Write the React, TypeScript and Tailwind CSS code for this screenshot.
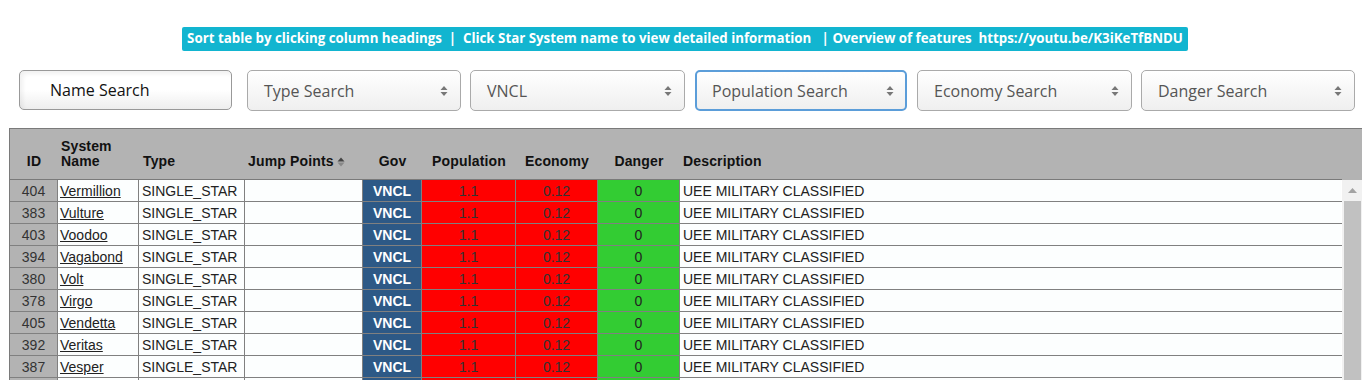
import React from "react";

const rows = [
  ["404", "Vermillion"],
  ["383", "Vulture"],
  ["403", "Voodoo"],
  ["394", "Vagabond"],
  ["380", "Volt"],
  ["378", "Virgo"],
  ["405", "Vendetta"],
  ["392", "Veritas"],
  ["387", "Vesper"],
  ["386", "Vector"],
];

const cols = "grid grid-cols-[48px_81px_106px_118px_59px_94px_82px_82px_661px]";

function Arrows() {
  return (
    <svg width="8" height="12" viewBox="0 0 8 12" className="shrink-0">
      <path d="M4 1 L7.5 5 L0.5 5 Z" fill="#777" />
      <path d="M4 11 L7.5 7 L0.5 7 Z" fill="#777" />
    </svg>
  );
}

function SelectBox({ label, w, focus }: { label: string; w: string; focus?: boolean }) {
  return (
    <div
      className={`${w} h-[41px] shrink-0 flex items-center justify-between rounded-[5px] bg-gradient-to-b from-white to-[#efefef] ${
        focus ? "border-2 border-[#5b9dd9] pl-[15px] pr-[11px]" : "border border-[#aaaaaa] pl-4 pr-[12px]"
      }`}
    >
      <span className="text-[16px] text-[#555]" style={{ fontFamily: '"Open Sans", sans-serif' }}>
        {label}
      </span>
      <Arrows />
    </div>
  );
}

export default function App() {
  return (
    <div className="w-[1370px] h-[380px] overflow-hidden bg-white">
      <div className="pt-[27px] flex justify-center">
        <div
          className="h-[24px] px-[5px] flex items-center bg-[#12b5d0] rounded-[2px] text-white font-bold text-[13.3px] whitespace-pre"
          style={{ fontFamily: '"Open Sans", sans-serif' }}
        >
          {"Sort table by clicking column headings  |  Click Star System name to view detailed information   | Overview of features  https://youtu.be/K3iKeTfBNDU"}
        </div>
      </div>

      <div className="mt-[19px] flex pl-[19px]">
        <div className="w-[213px] h-[40px] shrink-0 flex items-center pl-[30px] rounded-[5px] border border-[#999] bg-gradient-to-b from-white via-white to-[#eeeeee] shadow-[inset_3px_3px_4px_rgba(0,0,0,0.06)]">
          <span className="text-[16px] text-[#111]" style={{ fontFamily: '"Open Sans", sans-serif' }}>
            Name Search
          </span>
        </div>
        <div className="ml-[15px] flex">
          <SelectBox label="Type Search" w="w-[214px]" />
          <div className="w-[9px] shrink-0" />
          <SelectBox label="VNCL" w="w-[215px]" />
          <div className="w-[10px] shrink-0" />
          <SelectBox label="Population Search" w="w-[212px]" focus />
          <div className="w-[10px] shrink-0" />
          <SelectBox label="Economy Search" w="w-[215px]" />
          <div className="w-[9px] shrink-0" />
          <SelectBox label="Danger Search" w="w-[214px]" />
        </div>
      </div>

      <div
        className="mt-[17px] ml-[9px] w-[1353px] border-t border-l border-[#7a7a7a]"
        style={{ fontFamily: '"Liberation Sans", Arial, sans-serif' }}
      >
        <div className="h-[51px] bg-[#b3b3b3] border-b border-[#7a7a7a] w-[1332px] relative">
          <div className={`${cols} h-full items-end pb-[10px] text-[14px] font-bold text-[#111] leading-[15px] tracking-[0.15px]`}>
            <div className="text-center">ID</div>
            <div className="pl-[3px]">
              System
              <br />
              Name
            </div>
            <div className="pl-[4px]">Type</div>
            <div className="pl-[3px] flex items-center gap-[3px]">
              Jump Points
              <svg width="8" height="10" viewBox="0 0 8 10">
                <path d="M4 0.5 L7.5 4.5 L0.5 4.5 Z" fill="#444" />
                <path d="M4 9.5 L7.5 5.5 L0.5 5.5 Z" fill="#888" />
              </svg>
            </div>
            <div className="text-center">Gov</div>
            <div className="text-center">Population</div>
            <div className="text-center">Economy</div>
            <div className="text-center">Danger</div>
            <div className="pl-[3px]">Description</div>
          </div>
          <div className="absolute top-0 left-[1332px] w-[20px] h-[51px] bg-[#b3b3b3]" />
        </div>
        <div className="flex">
          <div className="w-[1332px]">
            {rows.map(([id, name]) => (
              <div key={id} className={`${cols} h-[22px] border-b border-[#808080] text-[14px] leading-[20px]`}>
                <div className="pt-px bg-[#b3b3b3] text-center text-[#333] border-r border-[#808080]">{id}</div>
                <div className="pt-px bg-[#fcfefe] pl-[2px] border-r border-[#808080]">
                  <span className="underline text-[#222]">{name}</span>
                </div>
                <div className="pt-px bg-[#fcfefe] pl-[3px] text-[#222] border-r border-[#808080]">SINGLE_STAR</div>
                <div className="pt-px bg-[#fcfefe] border-r border-[#808080]" />
                <div className="pt-px bg-[#2d5986] text-white font-bold text-center border-r border-[#808080]">VNCL</div>
                <div className="pt-px bg-[#ff0000] text-[#333] text-center border-r border-[#808080]">1.1</div>
                <div className="pt-px bg-[#ff0000] text-[#333] text-center border-r border-[#808080]">0.12</div>
                <div className="pt-px bg-[#33cc33] text-[#222] text-center border-r border-[#808080]">0</div>
                <div className="pt-px bg-[#fcfefe] pl-[3px] text-[#222]">UEE MILITARY CLASSIFIED</div>
              </div>
            ))}
          </div>
          <div className="w-[20px] bg-[#f1f1f1] flex flex-col items-center">
            <div className="h-[21px] flex items-center justify-center">
              <svg width="9" height="5" viewBox="0 0 9 5">
                <path d="M4.5 0 L9 5 L0 5 Z" fill="#a3a3a3" />
              </svg>
            </div>
            <div className="ml-[1px] w-[17px] h-[300px] bg-[#c1c1c1]" />
          </div>
        </div>
      </div>
    </div>
  );
}
